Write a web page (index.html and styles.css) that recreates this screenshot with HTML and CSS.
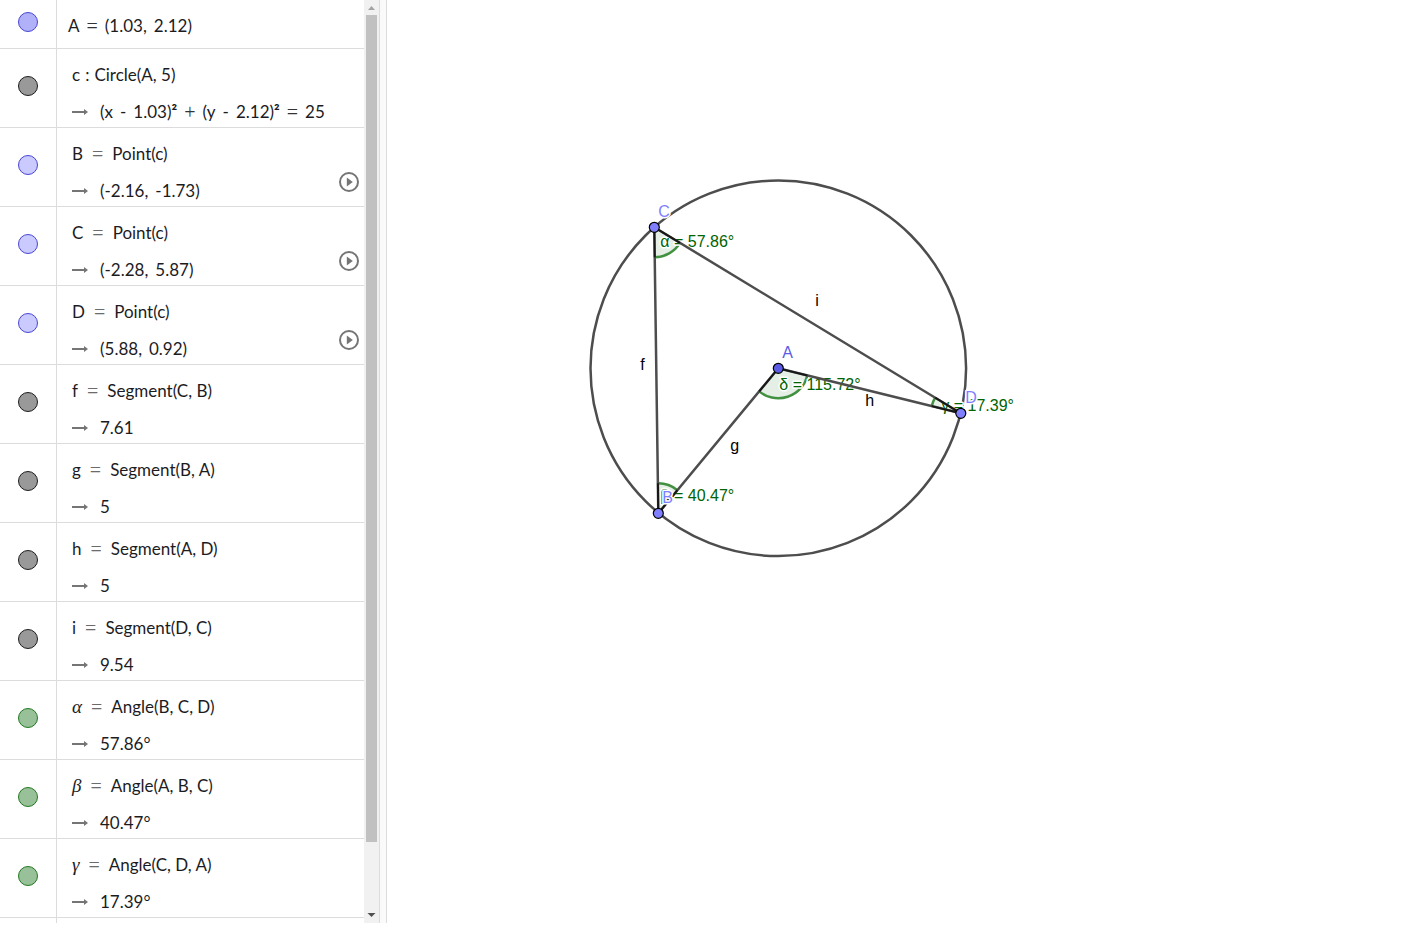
FILE: index.html
```html
<!DOCTYPE html>
<html lang="en">
<head>
<meta charset="utf-8">
<title>Geometry</title>
<link rel="stylesheet" href="styles.css">
</head>
<body>
<div class="app">
  <aside class="algebra">
    <ul class="rows" id="rows"></ul>
    <div class="scrollbar">
      <svg class="caret" viewBox="0 0 15 15"><path d="M4 10h7L7.500 6z" fill="#a3a3a3"/></svg>
      <div class="track"><div class="thumb"></div></div>
      <svg class="caret" viewBox="0 0 15 15"><path d="M3.500 5h8L7.500 9z" fill="#505050"/></svg>
    </div>
  </aside>
  <div class="splitter"></div>
  <main class="graphics">
    <svg class="canvas">
      <g transform="translate(391.300 368.300)">
        <circle class="line" r="187.800"/>
        <g class="angle">
          <path d="M-124-141L-123.600-111A30 30 0 0 0-98.300-125.400z"/>
          <path d="M-120 145L-120.400 115A30 30 0 0 1-100.900 121.900z"/>
          <path d="M182.500 45L156.900 29.400A30 30 0 0 0 153.400 37.800z"/>
          <path d="M0 0L29.100 7.200A30 30 0 0 1-19.100 23.100z"/>
        </g>
        <g class="arc">
          <path d="M-123.600-111A30 30 0 0 0-98.300-125.400"/>
          <path d="M-120.400 115A30 30 0 0 1-100.900 121.900"/>
          <path d="M156.900 29.400A30 30 0 0 0 153.400 37.800"/>
          <path d="M29.100 7.200A30 30 0 0 1-19.100 23.100"/>
        </g>
        <g class="label green">
          <text x="-118" y="-121">α = 57.86°</text>
          <text x="-118" y="133">β = 40.47°</text>
          <text x="163" y="43">γ = 17.39°</text>
          <text x="1" y="22">δ = 115.72°</text>
        </g>
        <path class="line" d="M-124-141L-120 145L0 0L182.500 45z"/>
        <path class="edge" d="M-123.600-111L-124-141L-98.300-125.400M-120.400 115L-120 145L-100.900 121.900M156.900 29.400L182.500 45L153.400 37.800M29.100 7.200L0 0L-19.100 23.100"/>
        <g class="label black">
          <text x="-138" y="2">f</text>
          <text x="-48" y="83">g</text>
          <text x="87" y="38">h</text>
          <text x="37" y="-62">i</text>
        </g>
        <g class="point">
          <circle r="5" cx="0" cy="0" class="free"/>
          <circle r="5" cx="-120" cy="145"/>
          <circle r="5" cx="-124" cy="-141"/>
          <circle r="5" cx="182.500" cy="45"/>
        </g>
        <g class="label blue">
          <text x="4" y="-10" class="free">A</text>
          <text x="-116" y="135">B</text>
          <text x="-120" y="-151">C</text>
          <text x="187" y="35">D</text>
        </g>
      </g>
    </svg>
  </main>
</div>
<script src="app.js"></script>
</body>
</html>
```
FILE: styles.css
```css
* { box-sizing: border-box; }
body {
  margin: 0;
  background: #fff;
  color: #1c1c1f;
  font-family: Lato, "Liberation Sans", sans-serif;
}
.app { display: flex; height: 100vh; padding-bottom: 2px; overflow: hidden; }
.algebra { display: flex; flex: 0 0 379px; min-height: 0; }
.rows { flex: 1; margin: 0; padding: 0; list-style: none; overflow: hidden; }
.row { display: flex; height: 79px; border-bottom: 1px solid #dcdcdc; }
.row.single { height: 49px; }
.row.rest { height: 30px; border-bottom: 0; }
.side {
  flex: 0 0 57px;
  padding: 27px 0 0 18px;
  border-right: 1px solid #dcdcdc;
}
.single .side { padding-top: 12px; }
.marble {
  display: block;
  width: 20px;
  height: 20px;
  padding: 0;
  border: 1px solid #1c1c1f;
  border-radius: 50%;
  background: #999;
}
.marble.free { border-color: #4646d2; background: #b1b1fa; }
.marble.path { border-color: #4646d2; background: #cacaff; }
.marble.ang { border-color: #217821; background: #99c199; }
.content { flex: 1; min-width: 0; padding: 14px 0 0 15px; }
.single .content { padding: 14px 0 0 11px; }
.math, .output, .terms {
  display: flex;
  align-items: center;
  height: 24px;
  font-size: 17px;
  line-height: 24px;
  white-space: pre;
}
.math { gap: 9px; }
.single .math { gap: 7px; }
.math.colon { gap: 5px; }
.output { gap: 12px; margin-top: 13px; }
.terms { gap: 7px; }
.eq { color: #6b6b6b; font: 20px/24px "Liberation Serif", serif; }
.single .eq, .terms .eq { color: #333; }
.colon .eq { color: #1c1c1f; font: 17px/24px Lato, sans-serif; }
.power { font-weight: bold; }
.greek { font: italic 19px/24px "Liberation Serif", serif; }
.arrow { flex: none; width: 16px; height: 8px; }
.play {
  align-self: flex-end;
  width: 20px;
  height: 20px;
  margin: 0 5px 14px 0;
  padding: 0;
  border: 0;
  background: none;
}
.play svg { display: block; width: 20px; height: 20px; }
.scrollbar { display: flex; flex: 0 0 15px; flex-direction: column; background: #f1f1f1; }
.caret { flex: none; width: 15px; height: 15px; }
.track { flex: 1; padding: 0 2px; }
.thumb { height: 92.600%; background: #c1c1c1; }
.splitter {
  flex: 0 0 8px;
  border: solid #dcdcdc;
  border-width: 0 1px;
  background: #fafafa;
}
.graphics { flex: 1; min-width: 0; }
.canvas { display: block; width: 100%; height: 100%; }
.line { fill: none; stroke: #4d4d4d; stroke-width: 2.500px; stroke-linejoin: round; }
.edge { fill: none; stroke: #000; stroke-width: 2px; stroke-opacity: .7; }
.angle { fill: #006400; fill-opacity: .1; }
.arc { fill: none; stroke: #419141; stroke-width: 2.500px; }
.point { fill: #8080ff; stroke: #000; stroke-width: 1.200px; }
.point .free { fill: #5b5be6; }
.label {
  font: 16px "Liberation Sans", Arial, sans-serif;
  paint-order: stroke;
  stroke: #fff;
  stroke-width: 3px;
  stroke-linejoin: round;
}
.green { fill: #006400; }
.black { fill: #000; }
.blue { fill: #8080ff; }
.blue .free { fill: #5b5be6; }
```
FILE: app.js
```javascript
const items = [
  ['free', 'A', '=', '(1.03, 2.12)'],
  ['', 'c', ':', 'Circle(A, 5)', '(x - 1.03)² + (y - 2.12)² = 25'],
  ['path', 'B', '=', 'Point(c)', '(-2.16, -1.73)', true],
  ['path', 'C', '=', 'Point(c)', '(-2.28, 5.87)', true],
  ['path', 'D', '=', 'Point(c)', '(5.88, 0.92)', true],
  ['', 'f', '=', 'Segment(C, B)', '7.61'],
  ['', 'g', '=', 'Segment(B, A)', '5'],
  ['', 'h', '=', 'Segment(A, D)', '5'],
  ['', 'i', '=', 'Segment(D, C)', '9.54'],
  ['ang', 'α', '=', 'Angle(B, C, D)', '57.86°'],
  ['ang', 'β', '=', 'Angle(A, B, C)', '40.47°'],
  ['ang', 'γ', '=', 'Angle(C, D, A)', '17.39°']
];
const arrow = '<svg class="arrow" viewBox="0 0 16 8"><path d="M0 3h12V1l4 3-4 3V5H0z" fill="#757575"/></svg>';
const play = '<button class="play" aria-label="Play"><svg viewBox="0 0 20 20"><circle cx="10" cy="10" r="9" fill="none" stroke="#757575" stroke-width="2"/><path d="M7.800 5.500v9l6-4.500z" fill="#757575"/></svg></button>';
const terms = text => '<span class="terms">' + text.split(' ').map(t =>
  `<span class="${t === '=' || t === '+' ? 'eq' : ''}">${t.replace('²', '<span class="power">²</span>')}</span>`).join('') + '</span>';
document.getElementById('rows').innerHTML = items.map(([kind, name, op, def, out, anim]) => `
  <li class="row ${out ? '' : 'single'}">
    <div class="side"><button class="marble ${kind}" aria-label="Show ${name}"></button></div>
    <div class="content">
      <div class="math ${op === ':' ? 'colon' : ''}"><span class="${kind === 'ang' ? 'greek' : ''}">${name}</span><span class="eq">${op}</span>${out ? `<span>${def}</span>` : terms(def)}</div>
      ${out ? `<div class="output">${arrow}${terms(out)}</div>` : ''}
    </div>
    ${anim ? play : ''}
  </li>`).join('') + '<li class="row rest"><div class="side"></div></li>';
```
